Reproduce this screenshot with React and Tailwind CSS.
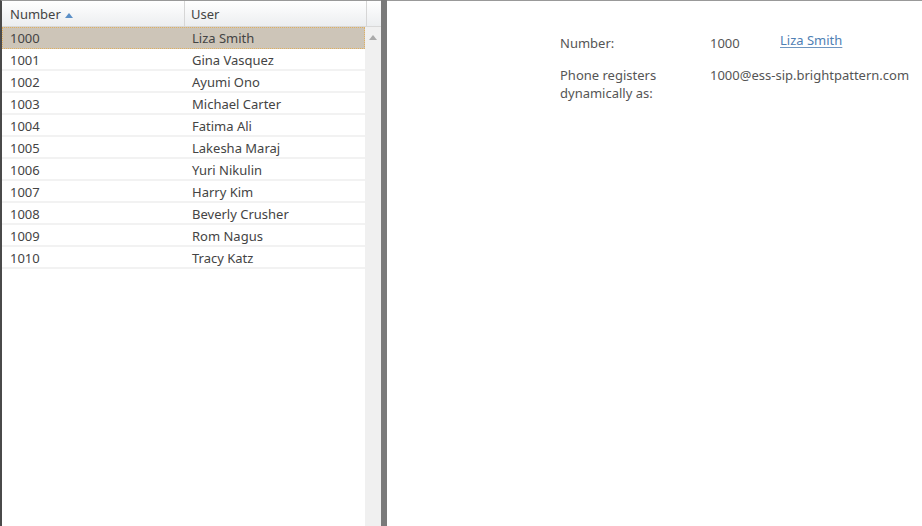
import React from 'react';

const rows = [
  ['1000', 'Liza Smith'],
  ['1001', 'Gina Vasquez'],
  ['1002', 'Ayumi Ono'],
  ['1003', 'Michael Carter'],
  ['1004', 'Fatima Ali'],
  ['1005', 'Lakesha Maraj'],
  ['1006', 'Yuri Nikulin'],
  ['1007', 'Harry Kim'],
  ['1008', 'Beverly Crusher'],
  ['1009', 'Rom Nagus'],
  ['1010', 'Tracy Katz'],
];

const App = () => {
  return (
    <div
      className="flex h-[526px] w-[922px] overflow-hidden bg-white text-[13px] text-[#444]"
      style={{ fontFamily: '"Noto Sans", "Open Sans", sans-serif' }}
    >
      {/* list pane */}
      <div className="flex h-full w-[381px] flex-col border-l-2 border-t border-l-[#4a4a4a] border-t-[#999]">
        <div className="flex h-[26px] border-b border-[#d8d8d8] bg-gradient-to-b from-white to-[#eceef0]">
          <div className="flex w-[183px] items-center gap-1 border-r border-[#d6d6d6] pl-[8px] pt-[2px]">
            <span>Number</span>
            <svg width="8" height="5" viewBox="0 0 8 5" className="mt-[1px]">
              <path d="M0 5 L4 0 L8 5 Z" fill="#5b8fc7" />
            </svg>
          </div>
          <div className="flex w-[182px] items-center border-r border-[#d6d6d6] pl-[6px] pt-[2px]">User</div>
          <div className="flex-1" />
        </div>
        <div className="flex flex-1">
          <div className="w-[363px]">
            {rows.map(([num, user], i) => (
              <div
                key={num}
                className={`flex h-[22px] items-center ${
                  i === 0
                    ? 'border border-dotted border-[#e0b060] bg-[#cdc5b8] pt-[2px]'
                    : 'border-b-2 border-[#f2f2f2] pt-[3px]'
                }`}
              >
                <div className={`w-[183px] ${i === 0 ? 'pl-[7px]' : 'pl-[8px]'}`}>{num}</div>
                <div className={i === 0 ? 'pl-[6px]' : 'pl-[7px]'}>{user}</div>
              </div>
            ))}
          </div>
          <div className="flex w-[16px] justify-center bg-[#f0f0f0] pt-[8px]">
            <svg width="8" height="5" viewBox="0 0 8 5">
              <path d="M0 5 L4 0 L8 5 Z" fill="#aaa" />
            </svg>
          </div>
        </div>
      </div>
      <div className="h-full w-[6px] bg-[#7a7a7a]" />
      {/* detail pane */}
      <div className="h-full flex-1 border-t border-[#999] pl-[173px] pt-[32px] text-[#555]">
        <div className="flex items-start">
          <div className="w-[150px] leading-[20px]">Number:</div>
          <div className="w-[70px] leading-[20px]">1000</div>
          <a
            href="#"
            className="-mt-[3px] leading-[20px] text-[#4f80b4] underline decoration-[#6f96c0] underline-offset-2"
          >
            Liza Smith
          </a>
        </div>
        <div className="mt-[13px] flex items-start">
          <div className="w-[150px] leading-[18px]">
            Phone registers
            <br />
            dynamically as:
          </div>
          <div className="leading-[18px]">1000@ess-sip.brightpattern.com</div>
        </div>
      </div>
    </div>
  );
};

export default App;
